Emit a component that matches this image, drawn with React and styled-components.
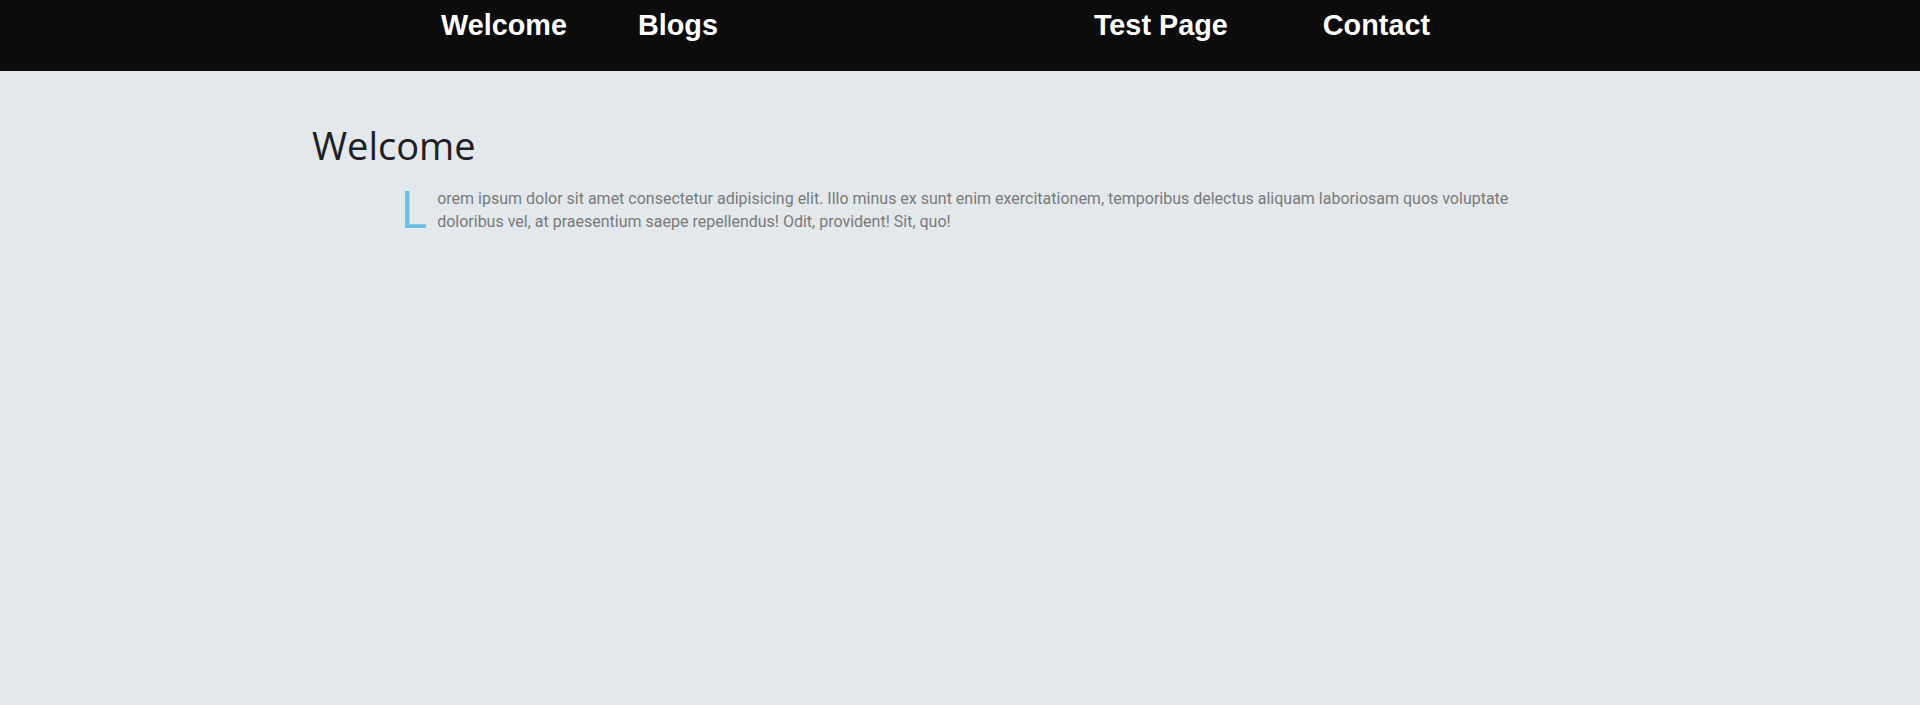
import React from "react";
import styled, { createGlobalStyle } from "styled-components";

const Global = createGlobalStyle`
  html, body { margin: 0; padding: 0; }
  body { background: #e2e8ec; font-family: "Liberation Sans", Arial, sans-serif; }
`;

const Page = styled.div`
  min-height: 705px;
  background: #e2e8ec;
`;

const NavBar = styled.nav`
  height: 71px;
  background: #0c0c0c;
  display: flex;
  align-items: flex-start;
  padding-left: 441px;
  box-sizing: border-box;
`;

const NavGroup = styled.div`
  display: flex;
  gap: ${(p) => p.$gap}px;
  margin-right: ${(p) => p.$after || 0}px;
`;

const NavLink = styled.a`
  font-family: "Liberation Sans", Arial, sans-serif;
  font-weight: 700;
  font-size: 28.8px;
  line-height: 1;
  color: #ffffff;
  text-decoration: none;
  padding-top: 11px;
`;

const Main = styled.main`
  padding: 0 312px;
`;

const Heading = styled.h1`
  margin: 0;
  padding-top: 46px;
  font-family: "Open Sans", "Noto Sans", sans-serif;
  font-weight: 400;
  font-size: 38px;
  line-height: 57px;
  color: #1f2023;
`;

const Paragraph = styled.p`
  margin: 13px 0 0 0;
  padding: 0 70px 0 91px;
  font-family: Roboto, sans-serif;
  font-size: 16px;
  line-height: 23px;
  color: #7a7a7a;
`;

const DropCap = styled.span`
  float: left;
  font-family: "Open Sans", "Noto Sans", sans-serif;
  font-weight: 400;
  font-size: 52px;
  line-height: 42px;
  color: #6bbfe5;
  margin-left: -3px;
  margin-right: 10px;
`;

export default function App() {
  return (
    <Page>
      <Global />
      <NavBar>
        <NavGroup $gap={71} $after={376}>
          <NavLink href="#">Welcome</NavLink>
          <NavLink href="#">Blogs</NavLink>
        </NavGroup>
        <NavGroup $gap={95}>
          <NavLink href="#">Test Page</NavLink>
          <NavLink href="#">Contact</NavLink>
        </NavGroup>
      </NavBar>
      <Main>
        <Heading>Welcome</Heading>
        <Paragraph>
          <DropCap>L</DropCap>
          orem ipsum dolor sit amet consectetur adipisicing elit. Illo minus ex sunt enim exercitationem, temporibus delectus aliquam laboriosam quos voluptate doloribus vel, at praesentium saepe repellendus! Odit, provident! Sit, quo!
        </Paragraph>
      </Main>
    </Page>
  );
}
